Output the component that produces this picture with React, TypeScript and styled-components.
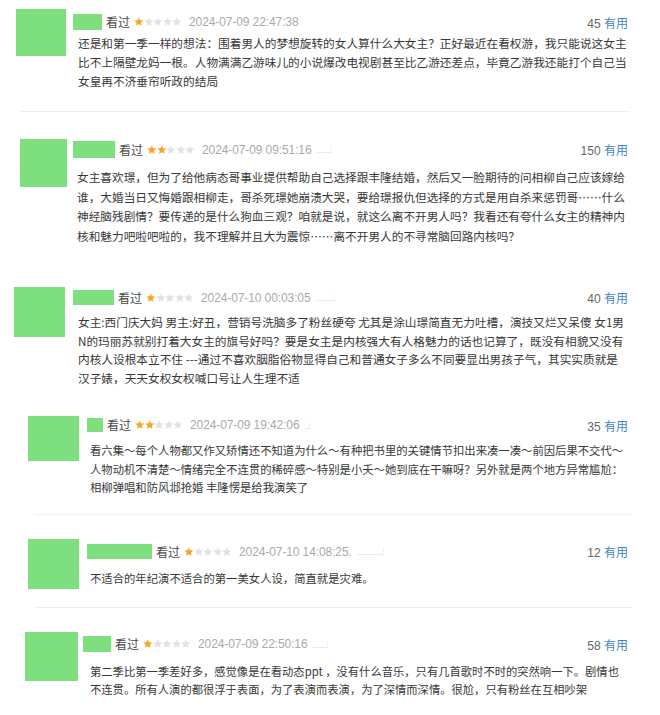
import React from "react";
import styled, { createGlobalStyle } from "styled-components";

const GlobalStyle = createGlobalStyle`
  html, body {
    margin: 0;
    padding: 0;
    background: #fff;
  }
  body {
    font-family: "Noto Sans CJK SC", "Liberation Sans", sans-serif;
  }
`;

interface Layout {
  slot: number; // height of the whole slot
  pt: number; // padding above avatar/header
  avX: number;
  avW: number;
  avH: number;
  avMt: number;
  gap: number; // avatar right -> text left
  nameW: number;
  nameH: number;
  nameShift: number;
  bodyMt: number;
  textMt: number;
  lh: number;
  fs: number;
  smudge?: number;
  divider?: { x: number; w: number };
}

interface Review {
  stars: number;
  date: string;
  votes: number;
  lines: string[];
  layout: Layout;
}

const reviews: Review[] = [
  {
    stars: 1,
    date: "2024-07-09 22:47:38",
    votes: 45,
    lines: [
      "还是和第一季一样的想法：围着男人的梦想旋转的女人算什么大女主？正好最近在看权游，我只能说这女主",
      "比不上隔壁龙妈一根。人物满满乙游味儿的小说爆改电视剧甚至比乙游还差点，毕竟乙游我还能打个自己当",
      "女皇再不济垂帘听政的结局",
    ],
    layout: {
      slot: 112, pt: 9, avX: 16, avW: 50, avH: 47, avMt: 0, gap: 12,
      nameW: 29, nameH: 16, nameShift: -5, bodyMt: 5, textMt: 3, lh: 19, fs: 11.68,
      divider: { x: 21, w: 609 },
    },
  },
  {
    stars: 2,
    date: "2024-07-09 09:51:16",
    votes: 150,
    lines: [
      "女主喜欢璟，但为了给他病态哥事业提供帮助自己选择跟丰隆结婚，然后又一脸期待的问相柳自己应该嫁给",
      "谁，大婚当日又悔婚跟相柳走，哥杀死璟她崩溃大哭，要给璟报仇但选择的方式是用自杀来惩罚哥……什么",
      "神经脑残剧情？要传递的是什么狗血三观？咱就是说，就这么离不开男人吗？我看还有夸什么女主的精神内",
      "核和魅力吧啦吧啦的，我不理解并且大为震惊……离不开男人的不寻常脑回路内核吗？",
    ],
    layout: {
      slot: 168, pt: 27, avX: 20, avW: 47, avH: 48, avMt: 0, gap: 10,
      nameW: 42, nameH: 17, nameShift: -4, bodyMt: 2, textMt: 9, lh: 19.5, fs: 11.66,
      smudge: 14,
    },
  },
  {
    stars: 1,
    date: "2024-07-10 00:03:05",
    votes: 40,
    lines: [
      "女主:西门庆大妈 男主:好丑，营销号洗脑多了粉丝硬夸 尤其是涂山璟简直无力吐槽，演技又烂又呆傻 女1男",
      "N的玛丽苏就别打着大女主的旗号好吗？要是女主是内核强大有人格魅力的话也记算了，既没有相貌又没有",
      "内核人设根本立不住 ---通过不喜欢胭脂俗物显得自己和普通女子多么不同要显出男孩子气，其实实质就是",
      "汉子婊，天天女权女权喊口号让人生理不适",
    ],
    layout: {
      slot: 128, pt: 7, avX: 14, avW: 51, avH: 50, avMt: 0, gap: 13,
      nameW: 41, nameH: 15, nameShift: -5, bodyMt: 3, textMt: 8, lh: 18.5, fs: 11.68,
      smudge: 18,
    },
  },
  {
    stars: 2,
    date: "2024-07-09 19:42:06",
    votes: 35,
    lines: [
      "看六集～每个人物都又作又矫情还不知道为什么～有种把书里的关键情节扣出来凑一凑～前因后果不交代～",
      "人物动机不清楚～情绪完全不连贯的稀碎感～特别是小夭～她到底在干嘛呀？另外就是两个地方异常尴尬：",
      "相柳弹唱和防风邶抢婚 丰隆愣是给我演笑了",
    ],
    layout: {
      slot: 107, pt: 8, avX: 28, avW: 51, avH: 45, avMt: 0, gap: 11,
      nameW: 16, nameH: 14, nameShift: -3, bodyMt: 2, textMt: 9, lh: 18.5, fs: 11.35,
      smudge: 4, divider: { x: 34, w: 598 },
    },
  },
  {
    stars: 1,
    date: "2024-07-10 14:08:25.",
    votes: 12,
    lines: ["不适合的年纪演不适合的第一美女人设，简直就是灾难。"],
    layout: {
      slot: 93, pt: 24, avX: 28, avW: 51, avH: 50, avMt: 0, gap: 11,
      nameW: 65, nameH: 15, nameShift: -3, bodyMt: 5, textMt: 10, lh: 18, fs: 11.35,
      smudge: 26, divider: { x: 34, w: 598 },
    },
  },
  {
    stars: 1,
    date: "2024-07-09 22:50:16",
    votes: 58,
    lines: [
      "第二季比第一季差好多，感觉像是在看动态ppt ，没有什么音乐，只有几首歌时不时的突然响一下。剧情也",
      "不连贯。所有人演的都很浮于表面，为了表演而表演，为了深情而深情。很尬，只有粉丝在互相吵架",
    ],
    layout: {
      slot: 107, pt: 24, avX: 25, avW: 53, avH: 49, avMt: 0, gap: 12,
      nameW: 28, nameH: 16, nameShift: -7, bodyMt: 4, textMt: 9.5, lh: 18.5, fs: 11.3,
      smudge: 14,
    },
  },
];

const Star: React.FC<{ on: boolean }> = ({ on }) => (
  <svg width="9.6" height="9.6" viewBox="0 0 10 10">
    <path
      d="M5 0.4l1.35 3.05 3.3.3-2.5 2.2.75 3.25L5 7.5 2.1 9.2l.75-3.25-2.5-2.2 3.3-.3z"
      fill={on ? "#f6a623" : "#e2e2e2"}
    />
  </svg>
);

const ReviewCard: React.FC<{ review: Review }> = ({ review }) => {
  const l = review.layout;
  return (
    <Card $h={l.slot}>
      <Row $pt={l.pt} $pl={l.avX}>
        <Avatar $w={l.avW} $h={l.avH} $mt={l.avMt} />
        <Body $ml={l.gap} $mt={l.bodyMt}>
          <Header $h={l.nameH}>
            <NameBar $w={l.nameW} $h={l.nameH} $shift={l.nameShift} />
            <Watched>看过</Watched>
            <StarRow>
              {[0, 1, 2, 3, 4].map((i) => (
                <Star key={i} on={i < review.stars} />
              ))}
            </StarRow>
            <DateText>{review.date}</DateText>
            {l.smudge ? <Smudge $w={l.smudge} /> : null}
            <Votes>
              {review.votes} <Useful>有用</Useful>
            </Votes>
          </Header>
          <Text $mt={l.textMt} $lh={l.lh} $fs={l.fs}>
            {review.lines.map((line, i) => (
              <Line key={i}>{line}</Line>
            ))}
          </Text>
        </Body>
      </Row>
      {l.divider && <Divider $x={l.divider.x} $w={l.divider.w} />}
    </Card>
  );
};

export default function App() {
  return (
    <>
      <GlobalStyle />
      <Page>
        {reviews.map((r, i) => (
          <ReviewCard key={i} review={r} />
        ))}
      </Page>
    </>
  );
}

const Page = styled.div`
  width: 660px;
  background: #fff;
`;

const Card = styled.div<{ $h: number }>`
  height: ${(p) => p.$h}px;
  display: flex;
  flex-direction: column;
  box-sizing: border-box;
  overflow: hidden;
`;

const Row = styled.div<{ $pt: number; $pl: number }>`
  display: flex;
  align-items: flex-start;
  padding: ${(p) => p.$pt}px 32px 0 ${(p) => p.$pl}px;
`;

const Avatar = styled.div<{ $w: number; $h: number; $mt: number }>`
  flex: none;
  width: ${(p) => p.$w}px;
  height: ${(p) => p.$h}px;
  margin-top: ${(p) => p.$mt}px;
  background: #7ddf7d;
`;

const Body = styled.div<{ $ml: number; $mt: number }>`
  flex: 1;
  min-width: 0;
  margin-left: ${(p) => p.$ml}px;
  margin-top: ${(p) => p.$mt}px;
`;

const Header = styled.div<{ $h: number }>`
  display: flex;
  align-items: center;
  height: ${(p) => p.$h}px;
  white-space: nowrap;
`;

const NameBar = styled.div<{ $w: number; $h: number; $shift: number }>`
  flex: none;
  width: ${(p) => p.$w}px;
  height: ${(p) => p.$h}px;
  margin-left: ${(p) => p.$shift}px;
  margin-right: 4px;
  background: #7ddf7d;
`;

const Watched = styled.span`
  font-size: 12px;
  line-height: 1;
  color: #4a4a4a;
  margin-right: 4px;
`;

const StarRow = styled.span`
  display: inline-flex;
  align-items: center;
  margin-right: 7px;
`;

const DateText = styled.span`
  font-family: "Liberation Sans", Arial, sans-serif;
  font-size: 12px;
  letter-spacing: -0.1px;
  color: #aaa;
`;

const Smudge = styled.span<{ $w: number }>`
  display: inline-block;
  width: ${(p) => p.$w}px;
  height: 6px;
  margin-left: 5px;
  border-bottom: 1px solid #ececec;
  border-right: 1px solid #f0f0f0;
`;

const Votes = styled.span`
  margin-left: auto;
  font-family: "Liberation Sans", Arial, sans-serif;
  font-size: 12px;
  color: #666;
`;

const Useful = styled.span`
  font-family: "Noto Sans CJK SC", sans-serif;
  color: #3d85c6;
`;

const Text = styled.div<{ $mt: number; $lh: number; $fs: number }>`
  margin-top: ${(p) => p.$mt}px;
  font-size: ${(p) => p.$fs}px;
  line-height: ${(p) => p.$lh}px;
  color: #383838;
  white-space: nowrap;
`;

const Line = styled.div``;

const Divider = styled.div<{ $x: number; $w: number }>`
  flex: none;
  margin: auto 0 0 ${(p) => p.$x}px;
  width: ${(p) => p.$w}px;
  height: 1px;
  background: #eeeeee;
`;
